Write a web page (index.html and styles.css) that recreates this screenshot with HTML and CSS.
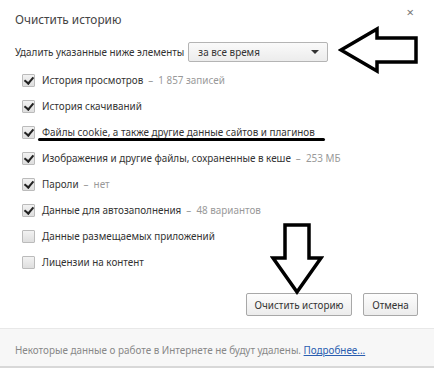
FILE: index.html
```html
<!DOCTYPE html>
<html>
	<head>
		<meta charset="utf-8" />
		<title>Очистить историю</title>
		<link rel="stylesheet" href="styles.css">
	</head>
	<body>
		<div class="dialog">
			<div class="head">
				<h1>Очистить историю</h1>
				<span class="close">×</span>
			</div>
			<div class="range">
				<span>Удалить указанные ниже элементы</span>
				<div class="select">
					<span>за все время</span>
					<i class="caret"></i>
				</div>
			</div>
			<ul class="items">
				<li><span class="box on"></span>История просмотров <em>–&nbsp; 1 857 записей</em></li>
				<li><span class="box on"></span>История скачиваний</li>
				<li><span class="box on"></span>Файлы cookie, а также другие данные сайтов и плагинов</li>
				<li><span class="box on"></span>Изображения и другие файлы, сохраненные в кеше <em>–&nbsp; 253 МБ</em></li>
				<li><span class="box on"></span>Пароли <em>–&nbsp; нет</em></li>
				<li><span class="box on"></span>Данные для автозаполнения <em>–&nbsp; 48 вариантов</em></li>
				<li><span class="box"></span>Данные размещаемых приложений</li>
				<li><span class="box"></span>Лицензии на контент</li>
			</ul>
			<div class="actions">
				<button class="primary">Очистить историю</button>
				<button class="cancel">Отмена</button>
			</div>
			<div class="foot">
				Некоторые данные о работе в Интернете не будут удалены. <a href="#">Подробнее...</a>
			</div>

			<svg class="mark mark-left" width="82" height="48" viewBox="0 0 82 48">
				<path d="M3 24 L39 3 L39 12 L78 12 L78 36 L39 36 L39 45 Z" fill="none" stroke="#000" stroke-width="3.5" stroke-linejoin="miter"/>
			</svg>
			<svg class="mark mark-down" width="54" height="72" viewBox="0 0 54 72">
				<path d="M15 2 L39 2 L39 35 L51 35 L27 69 L3 35 L15 35 Z" fill="none" stroke="#000" stroke-width="3.5" stroke-linejoin="miter"/>
			</svg>
			<div class="mark line"></div>
		</div>
	</body>
</html>
```

FILE: styles.css
```css
body {
	margin: 0;
	background: #fff;
	font-family: "Noto Sans", "Open Sans", sans-serif;
	font-size: 9.9px;
	color: #333;
}

.dialog {
	width: 434px;
	height: 374px;
	position: relative;
	overflow: hidden;
}

.head {
	display: flex;
	justify-content: space-between;
	padding: 10px 20px 0 15px;
	height: 30px;
	box-sizing: border-box;
}

.head h1 {
	margin: 0;
	font-size: 11.8px;
	font-weight: 400;
	color: #444;
	line-height: 18px;
}

.close {
	font-size: 13px;
	color: #777;
	line-height: 4px;
}

.range {
	display: flex;
	align-items: center;
	gap: 4px;
	padding: 12px 15px 0;
	height: 20px;
}

.select {
	width: 121px;
	height: 18px;
	border: 1px solid #b4b4b4;
	border-radius: 2px;
	background: linear-gradient(#fafafa, #ececec);
	display: flex;
	align-items: center;
	justify-content: space-between;
	padding: 0 8px 0 9px;
}

.caret {
	width: 0;
	height: 0;
	border-left: 4px solid transparent;
	border-right: 4px solid transparent;
	border-top: 4px solid #333;
}

.items {
	list-style: none;
	margin: 5px 0 0;
	padding: 0 0 0 22px;
}

.items li {
	height: 26px;
	display: flex;
	align-items: center;
	white-space: nowrap;
}

.items em {
	font-style: normal;
	color: #999;
	margin-left: 5px;
}

.box {
	width: 11px;
	height: 11px;
	border: 1px solid #bbb;
	border-radius: 1px;
	background: linear-gradient(#f2f2f2, #dedede);
	margin-right: 7px;
	position: relative;
	flex: none;
}

.box.on::after {
	content: "";
	position: absolute;
	left: 3px;
	top: 0px;
	width: 4px;
	height: 7px;
	border-right: 2px solid #222;
	border-bottom: 2px solid #222;
	transform: rotate(40deg);
}

.actions {
	display: flex;
	justify-content: flex-end;
	gap: 11px;
	padding: 18px 16px 0;
}

.actions button {
	font: inherit;
	color: #333;
	height: 23px;
	padding: 0;
	border: 1px solid #a8a8a8;
	border-radius: 2px;
	background: linear-gradient(#fdfdfd, #ececec);
}

.primary {
	width: 106px;
}

.cancel {
	width: 55px;
}

.foot {
	margin-top: 12px;
	height: 40px;
	border-top: 1px solid #e8e8e8;
	border-bottom: 2px solid #d8d8d8;
	background: #f7f7f7;
	padding: 14px 0 0 15px;
	box-sizing: border-box;
	color: #888;
}

.foot a {
	color: #2a5db0;
}

.mark {
	position: absolute;
}

.mark-left {
	left: 338px;
	top: 26px;
}

.mark-down {
	left: 270px;
	top: 223px;
}

.line {
	left: 38px;
	top: 138px;
	width: 287px;
	height: 3px;
	border-radius: 2px;
	background: #000;
}
```
